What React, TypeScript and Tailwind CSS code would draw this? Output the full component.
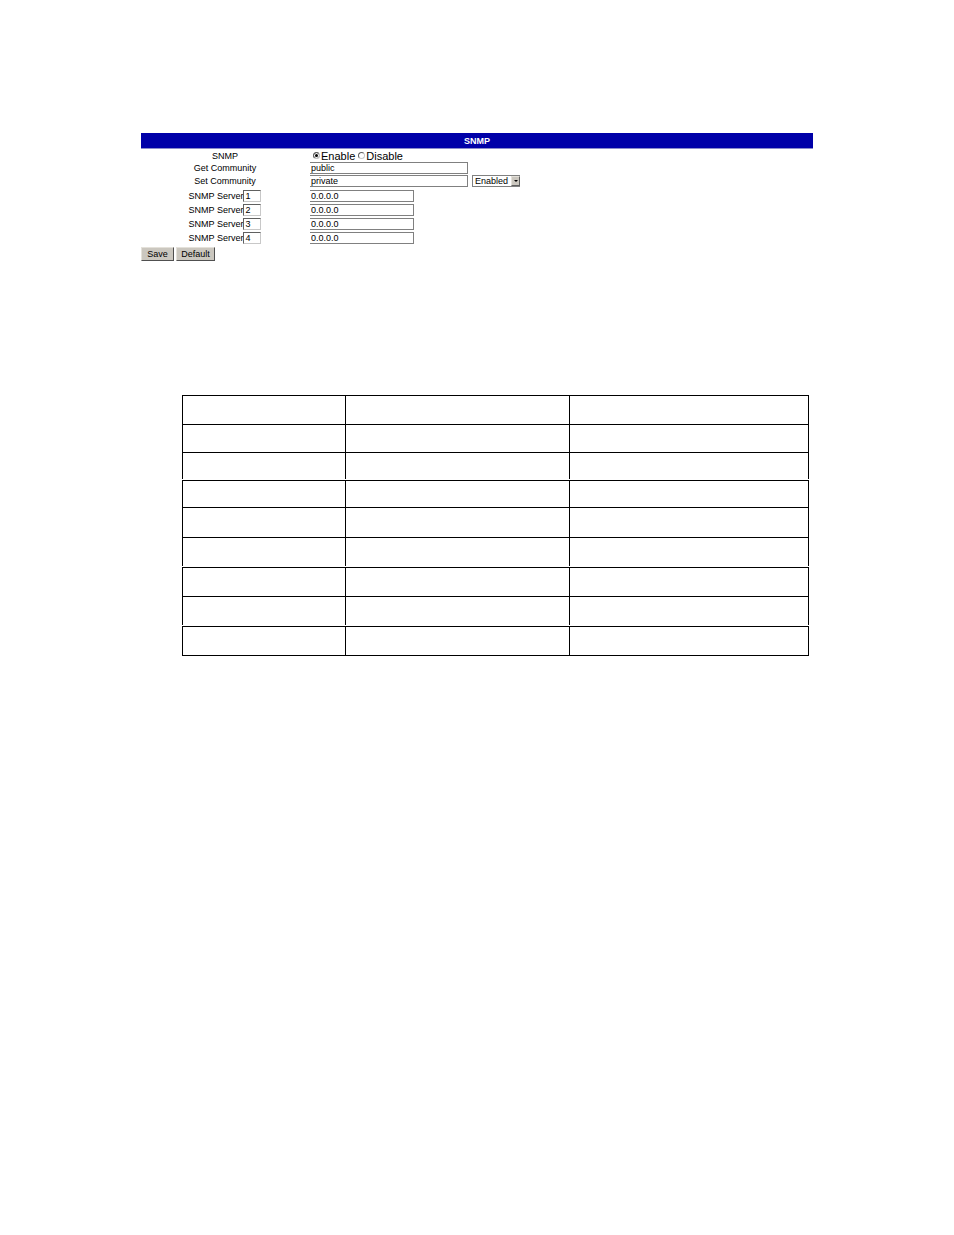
import { useState } from "react";

const servers = [1, 2, 3, 4];

const fieldClass =
  "h-3 border border-l-0 border-[#808080] bg-white px-px text-[9px] leading-[10px] text-black outline-none";

const radioClass =
  "size-[7px] appearance-none rounded-full border border-[#606060] border-r-[#c8c8c8] border-b-[#c8c8c8] bg-white checked:bg-black checked:shadow-[inset_0_0_0_1px_white]";

const buttonClass =
  "h-[14px] border border-[#e4e1da] border-r-[#505050] border-b-[#505050] bg-[#cbc7bf] text-center text-[9px] leading-[12px] text-black";

const rowGroups: string[][] = [
  ["h-[29px]", "h-[28px]", "h-[27px]"],
  ["h-[27px]", "h-[30px]", "h-[29px]"],
  ["h-[29px]", "h-[29px]"],
  ["h-[30px]"],
];

function SnmpForm() {
  const [enabled, setEnabled] = useState(true);
  return (
    <form onSubmit={(e) => e.preventDefault()}>
      <h1 className="h-4 border-b border-[#8c8ccc] bg-[#0000a8] text-center text-[9px] leading-4 font-bold text-white">
        SNMP
      </h1>
      <div className="grid grid-cols-[25%_75%] items-center">
        <div id="snmp-label" className="h-[13px] text-center leading-[14px]">
          SNMP
        </div>
        <div
          role="radiogroup"
          aria-labelledby="snmp-label"
          className="flex h-[13px] items-center gap-[3px] pl-1 text-[11px] leading-[14px]"
        >
          <label className="flex items-center gap-[1px]">
            <input
              type="radio"
              name="snmp"
              className={radioClass}
              checked={enabled}
              onChange={() => setEnabled(true)}
            />
            Enable
          </label>
          <label className="flex items-center gap-[1px]">
            <input
              type="radio"
              name="snmp"
              className={radioClass}
              checked={!enabled}
              onChange={() => setEnabled(false)}
            />
            Disable
          </label>
        </div>

        <label htmlFor="get" className="h-[13px] text-center leading-[13px]">
          Get Community
        </label>
        <div className="flex h-[13px] items-start pl-px">
          <input id="get" defaultValue="public" className={`${fieldClass} w-[158px]`} />
        </div>

        <label htmlFor="set" className="h-[13px] text-center leading-[13px]">
          Set Community
        </label>
        <div className="flex h-[13px] items-start gap-1 pl-px">
          <input id="set" defaultValue="private" className={`${fieldClass} w-[158px]`} />
          <div className="grid h-3 w-12 grid-cols-[1fr_9px] border border-r-0 border-[#808080]">
            <select
              aria-label="Set community access"
              className="col-span-2 col-start-1 row-start-1 h-[10px] w-full appearance-none bg-white pl-[2px] text-[9px] leading-[10px] outline-none"
            >
              <option>Enabled</option>
              <option>Disabled</option>
            </select>
            <span className="pointer-events-none col-start-2 row-start-1 flex h-[10px] items-center justify-center border border-[#e4e1da] border-r-[#606060] border-b-[#606060] bg-[#cbc7bf]">
              <svg width="4" height="2" viewBox="0 0 4 2" aria-hidden="true">
                <path d="M0 0h4L2 2z" fill="black" />
              </svg>
            </span>
          </div>
        </div>
      </div>

      <div className="mt-px grid grid-cols-[25%_75%] items-center">
        {servers.map((n) => (
          <div key={n} className="contents">
            <div className="flex h-[14px] items-center justify-center">
              <label htmlFor={`index-${n}`}>SNMP Server</label>
              <input
                id={`index-${n}`}
                defaultValue={n}
                className="h-3 w-[18px] border border-[#606060] border-r-[#c8c8c8] border-b-[#c8c8c8] bg-white pl-px text-[9px] leading-[10px] outline-none"
              />
            </div>
            <div className="flex h-[14px] items-center pl-px">
              <input
                aria-label={`SNMP Server ${n} address`}
                defaultValue="0.0.0.0"
                className={`${fieldClass} w-[104px]`}
              />
            </div>
          </div>
        ))}
      </div>

      <div className="mt-[2px] flex gap-[2px]">
        <button type="submit" className={`${buttonClass} w-[33px]`}>
          Save
        </button>
        <button type="reset" className={`${buttonClass} w-[39px]`}>
          Default
        </button>
      </div>
    </form>
  );
}

function BlankTable() {
  return (
    <table className="w-full table-fixed border-separate border-spacing-0">
      <colgroup>
        <col className="w-[26%]" />
        <col className="w-[35.7%]" />
        <col />
      </colgroup>
      {rowGroups.map((rows, g) => (
        <tbody key={g}>
          {g > 0 && (
            <tr>
              <td colSpan={3} className="h-px p-0" />
            </tr>
          )}
          {rows.map((height, r) => {
            const bottom = g === rowGroups.length - 1 ? "border-b" : "";
            return (
              <tr key={r} className={height}>
                <td className={`border-t border-l border-black p-0 ${bottom}`} />
                <td className={`border-t border-l border-black p-0 ${bottom}`} />
                <td className={`border-t border-x border-black p-0 ${bottom}`} />
              </tr>
            );
          })}
        </tbody>
      ))}
    </table>
  );
}

export default function App() {
  return (
    <main className="min-h-screen bg-white px-[141px] pt-[133px] pb-16 font-['Liberation_Sans',Arial,sans-serif] text-[9px] leading-3 text-black">
      <SnmpForm />
      <div className="mt-[134px] mr-1 ml-[41px]">
        <BlankTable />
      </div>
    </main>
  );
}
